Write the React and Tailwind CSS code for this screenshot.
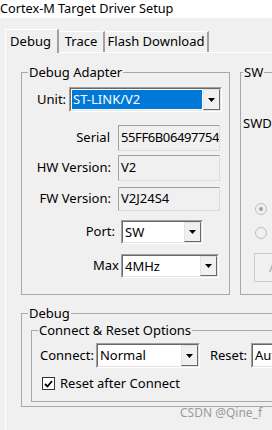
import React from 'react';

// classic Win32 combo box
function Combo({ value, selected, className }) {
  return (
    <div className={`flex border border-t-[#a0a0a0] border-l-[#a0a0a0] border-b-white border-r-white ${className}`}>
      <div className="flex flex-1 items-center border border-t-[#696969] border-l-[#696969] border-b-[#e3e3e3] border-r-[#e3e3e3] bg-white pl-[1px]">
        <span
          className={`flex-1 truncate leading-[19px] h-[19px] px-[1px] ${selected ? 'bg-[#0078d7] text-white' : 'text-black'}`}
        >
          {value}
        </span>
        <div className="ml-[1px] flex h-full w-[17px] shrink-0 items-center justify-center border border-t-[#e3e3e3] border-l-[#e3e3e3] border-b-[#696969] border-r-[#696969] bg-[#f0f0f0]">
          <svg width="7" height="4" viewBox="0 0 7 4">
            <polygon points="0,0 7,0 3.5,4" fill="#000" />
          </svg>
        </div>
      </div>
    </div>
  );
}

function ReadBox({ value, className }) {
  return (
    <div className={`flex items-center overflow-hidden whitespace-nowrap border border-t-[#a0a0a0] border-l-[#a0a0a0] border-b-[#dcdcdc] border-r-[#dcdcdc] bg-[#f0f0f0] pl-[2px] ${className}`}>
      {value}
    </div>
  );
}

function Group({ title, className, children }) {
  return (
    <fieldset className={`border border-[#a8a8a8] rounded-none ${className}`}>
      <legend className="ml-[6px] px-[1px] leading-[16px]">{title}</legend>
      {children}
    </fieldset>
  );
}

export default function App() {
  return (
    <div
      className="relative h-[430px] w-[272px] overflow-hidden bg-[#f0f0f0] text-[13px] text-black"
      style={{ fontFamily: '"Noto Sans", "Open Sans", sans-serif' }}
    >
      {/* title */}
      <div className="h-[18px] bg-white text-[12.7px] leading-[16px]">Cortex-M Target Driver Setup</div>

      {/* tabs */}
      <div className="flex items-end pl-[5px] pt-[11px]">
        <div className="relative z-10 -mb-[1px] flex h-[24px] w-[54px] items-center justify-center border-l border-t border-white border-r-2 border-r-[#a0a0a0] bg-[#f0f0f0] pr-[2px]">
          Debug
        </div>
        <div className="flex h-[21px] w-[46px] items-center justify-center border-t border-white border-r-2 border-r-[#a0a0a0]">
          Trace
        </div>
        <div className="flex h-[21px] w-[104px] items-center justify-center border-t border-white border-r-2 border-r-[#a0a0a0]">
          Flash Download
        </div>
      </div>

      {/* tab panel */}
      <div className="ml-[5px] h-[400px] border-l border-t border-white pl-[15px] pt-[11px]">
        <div className="flex gap-[10px]">
          <Group title="Debug Adapter" className="h-[231px] w-[209px] shrink-0">
            <div className="flex items-center pt-[7px]">
              <span className="ml-[15px] w-[26px]">Unit:</span>
              <Combo value="ST-LINK/V2" selected className="ml-[6px] h-[25px] w-[153px]" />
            </div>
            <div className="mt-[13px] flex items-center">
              <span className="w-[96px] pr-[8px] text-right">Serial</span>
              <ReadBox value="55FF6B06497754" className="h-[26px] w-[102px] tracking-[-0.4px]" />
            </div>
            <div className="mt-[4px] flex items-center">
              <span className="w-[96px] pr-[7px] text-right">HW Version:</span>
              <ReadBox value="V2" className="h-[26px] w-[102px]" />
            </div>
            <div className="mt-[6px] flex items-center">
              <span className="w-[96px] pr-[7px] text-right">FW Version:</span>
              <ReadBox value="V2J24S4" className="h-[24px] w-[102px]" />
            </div>
            <div className="mt-[9px] flex items-center">
              <span className="w-[99px] pr-[6px] text-right">Port:</span>
              <Combo value="SW" className="h-[24px] w-[82px]" />
            </div>
            <div className="mt-[10px] flex items-center">
              <span className="w-[99px] pr-[2px] text-right">Max</span>
              <Combo value="4MHz" className="h-[24px] w-[98px]" />
            </div>
          </Group>

          <Group title="SW" className="h-[231px] w-[80px] shrink-0 [&>legend]:ml-[2px]">
            <div className="mt-[34px] pl-[2px]">SWD</div>
            <div className="ml-[14px] mt-[69px] flex h-[12px] w-[12px] items-center justify-center rounded-full border border-[#bcbcbc] bg-[#f0f0f0]">
              <div className="h-[4px] w-[4px] rounded-full bg-[#a0a0a0]" />
            </div>
            <div className="ml-[14px] mt-[12px] h-[12px] w-[12px] rounded-full border border-[#bcbcbc] bg-[#f0f0f0]" />
            <div className="ml-[13px] mt-[14px] h-[29px] w-[60px] border border-[#cccccc] bg-[#f0f0f0] pl-[14px] leading-[27px] text-[#a0a0a0]">
              /
            </div>
          </Group>
        </div>

        <Group title="Debug" className="mt-[10px] h-[102px] w-[300px]">
          <Group title="Connect & Reset Options" className="ml-[9px] mt-[1px] h-[80px] w-[300px]">
            <div className="flex items-center pt-[5px]">
              <span className="ml-[8px]">Connect:</span>
              <Combo value="Normal" className="ml-[2px] h-[25px] w-[104px]" />
              <span className="ml-[10px]">Reset:</span>
              <Combo value="Autodetect" className="ml-[4px] h-[25px] w-[100px]" />
            </div>
            <div className="mt-[6px] flex items-center">
              <div className="ml-[10px] flex h-[13px] w-[13px] items-center justify-center border border-[#333] bg-white">
                <svg width="9" height="8" viewBox="0 0 9 8">
                  <polyline points="1,4 3.5,6.5 8,1" fill="none" stroke="#000" strokeWidth="1.8" />
                </svg>
              </div>
              <span className="ml-[5px]">Reset after Connect</span>
            </div>
          </Group>
        </Group>
      </div>

      <div className="absolute left-[180px] top-[405px] text-[12px] leading-[16px] text-[#9a9a9a]">
        CSDN @Qine_f
      </div>
    </div>
  );
}
